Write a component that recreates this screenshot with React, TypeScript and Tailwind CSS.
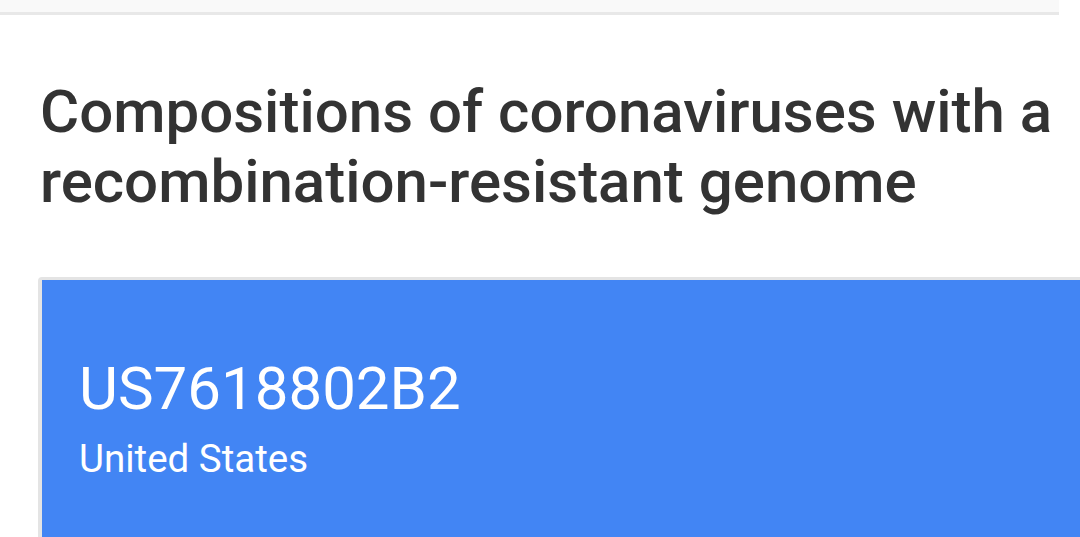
export default function App() {
  return (
    <div className="w-[1080px] h-[537px] overflow-hidden bg-white" style={{ fontFamily: "Roboto, 'Noto Sans', sans-serif" }}>
      <div className="w-[1059px] h-[15px] bg-[#f9f9f9] border-b-[3px] border-[#e8e8e8]" />
      <h1 className="mt-[62px] ml-[40px] text-[60px] leading-[70px] font-medium text-[#333333] whitespace-nowrap">
        Compositions of coronaviruses with a<br />recombination-resistant genome
      </h1>
      <div className="mt-[60px] ml-[38px] w-[1100px] h-[300px] rounded-[4px] border-l-[4px] border-t-[3px] border-[#e4e4e4] bg-[#4285f4] pl-[37px] pt-[74px] text-white">
        <div className="text-[60px] leading-[70px]">US7618802B2</div>
        <div className="text-[38.5px] leading-[44px] mt-[13px]">United States</div>
      </div>
    </div>
  );
}
